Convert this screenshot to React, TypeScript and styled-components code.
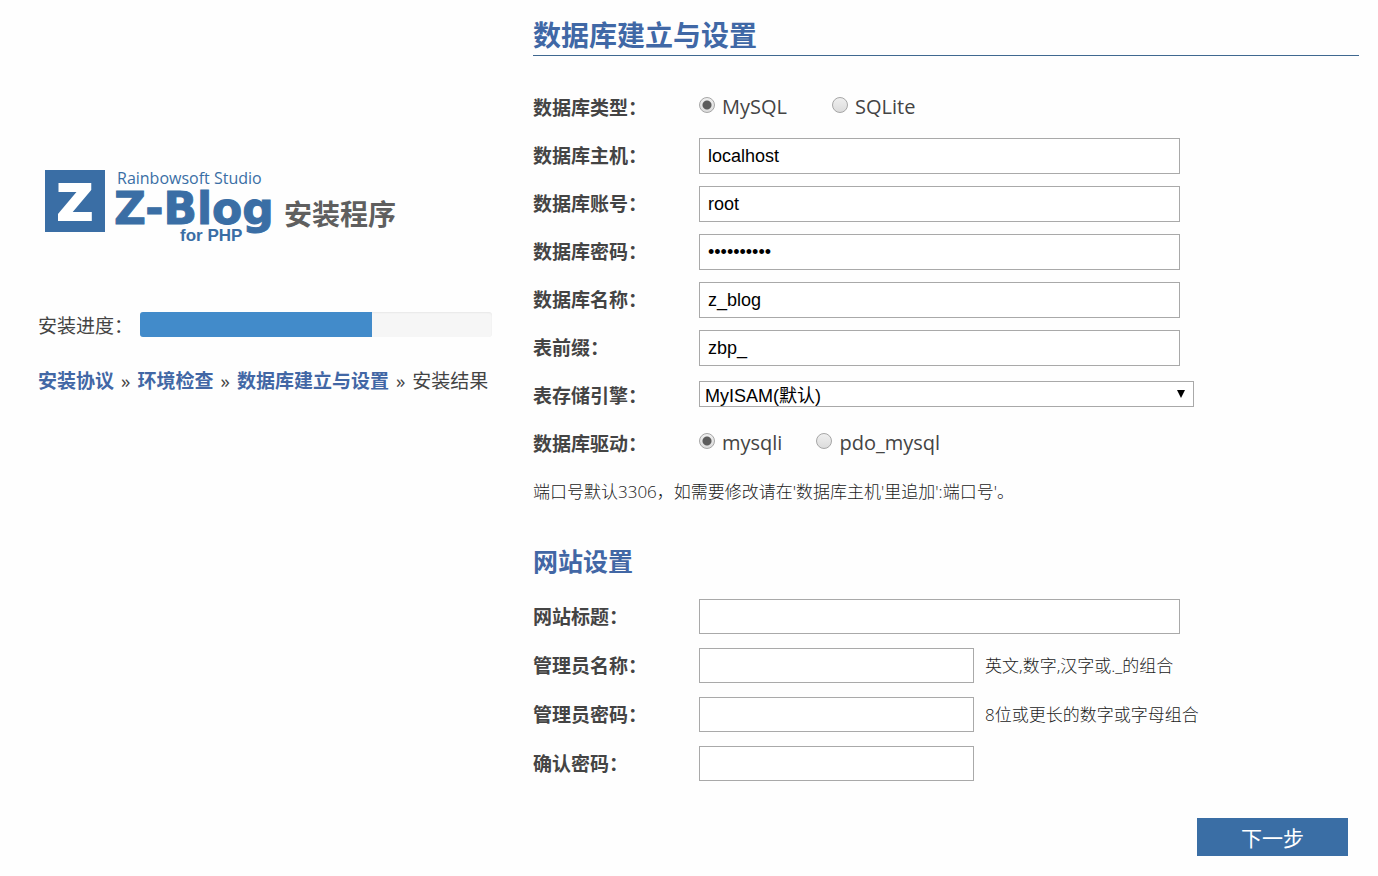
import React from "react";
import styled, { createGlobalStyle } from "styled-components";

const uiFont = `"Open Sans", "Noto Sans CJK SC", sans-serif`;
const fieldFont = `"Liberation Sans", "Noto Sans CJK SC", sans-serif`;

const GlobalStyle = createGlobalStyle`
  *, *::before, *::after { box-sizing: border-box; }
  body {
    margin: 0;
    background: #fefefe;
    color: #444;
    font-family: ${uiFont};
    font-size: 19px;
    line-height: 28px;
  }
`;

const Page = styled.form`
  display: grid;
  grid-template-columns: 454px minmax(0, 1fr);
  column-gap: 41px;
  padding: 16px 19px 20px 38px;
`;

const Sidebar = styled.aside`
  display: flex;
  flex-direction: column;
  padding-top: 148px;
`;

const Brand = styled.h1`
  display: flex;
  align-items: center;
  gap: 9px;
  margin: 0 0 68px;
  color: #5f5f5f;
  font-size: 28px;
  line-height: 40px;
`;

const Logo = styled.svg`
  display: block;
  flex: none;
`;

const BrandText = styled.span`
  padding-top: 20px;
`;

const Progress = styled.div`
  display: flex;
  align-items: flex-start;
  gap: 7px;
  margin-bottom: 27px;
`;

const ProgressLabel = styled.span`
  flex: none;
`;

const Track = styled.div`
  flex: 1;
  height: 25px;
  overflow: hidden;
  border-radius: 3px;
  background: #f6f6f6;
  box-shadow: inset 0 1px 2px rgba(0, 0, 0, 0.06);
`;

const Fill = styled.div`
  height: 100%;
  background: #428bca;
`;

const Steps = styled.ol`
  display: flex;
  margin: 0;
  padding: 0;
  list-style: none;
  white-space: nowrap;

  li + li::before {
    content: "»";
    margin: 0 7px;
    color: #444;
    font-weight: 400;
  }
`;

const Step = styled.li<{ $reached?: boolean }>`
  color: ${(p) => (p.$reached ? "#4267a5" : "#444")};
  font-weight: ${(p) => (p.$reached ? 700 : 400)};
`;

const Main = styled.main`
  min-width: 0;
`;

const Title = styled.h2`
  margin: 0 0 28px;
  border-bottom: 1px solid #3f6890;
  color: #4068a6;
  font-size: 28px;
  line-height: 39px;
`;

const Subtitle = styled.h3`
  margin: 0 0 13px;
  color: #4267a5;
  font-size: 25px;
  line-height: 36px;
`;

const Row = styled.div<{ $height?: number }>`
  display: flex;
  align-items: center;
  height: ${(p) => p.$height ?? 48}px;
`;

const Label = styled.label`
  flex: none;
  width: 166px;
  font-weight: 700;
`;

const Input = styled.input<{ $width?: number; $height?: number }>`
  flex: 0 1 ${(p) => p.$width ?? 481}px;
  min-width: 0;
  height: ${(p) => p.$height ?? 36}px;
  padding: 0 8px;
  border: 1px solid #a9a9a9;
  border-radius: 0;
  background: #fff;
  color: #000;
  font-family: ${fieldFont};
  font-size: 18px;
`;

const SelectBox = styled.div`
  position: relative;
  flex: 0 1 495px;
  min-width: 0;
  padding-bottom: 4px;
`;

const Select = styled.select`
  display: block;
  width: 100%;
  height: 26px;
  padding: 3px 24px 0 5px;
  appearance: none;
  border: 1px solid #a9a9a9;
  border-radius: 0;
  background: #fff;
  color: #000;
  font-family: ${fieldFont};
  font-size: 18px;
`;

const Arrow = styled.svg`
  position: absolute;
  top: 9px;
  right: 8px;
  pointer-events: none;
`;

const Choices = styled.div<{ $gap: number }>`
  display: flex;
  gap: ${(p) => p.$gap}px;
  padding-bottom: 2px;
  font-size: 20px;
`;

const Choice = styled.label`
  display: flex;
  gap: 7px;
`;

const Radio = styled.input`
  appearance: none;
  width: 16px;
  height: 16px;
  margin: 4px 0 0;
  border: 1px solid #a6a6a6;
  border-radius: 50%;
  background: linear-gradient(#efefef, #dcdcdc);

  &:checked {
    background: radial-gradient(circle, #5c5c5c 4px, transparent 5px),
      linear-gradient(#efefef, #dcdcdc);
  }
`;

const Note = styled.p`
  margin: 10px 0 37px;
  color: #222;
  font-size: 17px;
  font-weight: 300;
`;

const Hint = styled.span`
  margin-left: 11px;
  color: #222;
  font-size: 17px;
  font-weight: 300;
  white-space: nowrap;
`;

const Actions = styled.div`
  display: flex;
  justify-content: flex-end;
  padding: 30px 11px 0 0;
`;

const NextButton = styled.button`
  width: 151px;
  height: 38px;
  padding: 0;
  border: 0;
  background: #3a6ea5;
  color: #fff;
  font-family: ${uiFont};
  font-size: 21px;
`;

type Field = {
  id: string;
  label: string;
  type?: string;
  value?: string;
  width?: number;
  hint?: string;
};

const databaseFields: Field[] = [
  { id: "dbhost", label: "数据库主机", value: "localhost" },
  { id: "dbuser", label: "数据库账号", value: "root" },
  { id: "dbpass", label: "数据库密码", value: "zblogadmin", type: "password" },
  { id: "dbname", label: "数据库名称", value: "z_blog" },
  { id: "dbprefix", label: "表前缀", value: "zbp_" },
];

const siteFields: Field[] = [
  { id: "blogtitle", label: "网站标题" },
  { id: "username", label: "管理员名称", width: 275, hint: "英文,数字,汉字或._的组合" },
  { id: "password", label: "管理员密码", type: "password", width: 275, hint: "8位或更长的数字或字母组合" },
  { id: "repassword", label: "确认密码", type: "password", width: 275 },
];

function RadioRow({ name, label, options, gap }: { name: string; label: string; options: string[]; gap: number }) {
  return (
    <Row>
      <Label as="span" id={`${name}-label`}>{label}：</Label>
      <Choices role="radiogroup" aria-labelledby={`${name}-label`} $gap={gap}>
        {options.map((option, i) => (
          <Choice key={option}>
            <Radio type="radio" name={name} value={option} defaultChecked={i === 0} />
            {option}
          </Choice>
        ))}
      </Choices>
    </Row>
  );
}

function ZBlogLogo() {
  return (
    <Logo width="237" height="80" viewBox="0 0 237 80" role="img" aria-label="Z-Blog for PHP">
      <rect x="7" y="6" width="60" height="62" fill="#3a6ea5" />
      <g fill="#3a6ea5">
        <text x="37" y="56" textAnchor="middle" fill="#fff" stroke="#fff" strokeWidth="2" fontFamily="DejaVu Sans" fontWeight="700" fontSize="50">Z</text>
        <text x="79" y="20" fontFamily="Open Sans" fontWeight="400" fontSize="16">Rainbowsoft Studio</text>
        <text x="76" y="60" fontFamily="DejaVu Sans" fontWeight="700" fontSize="44" stroke="#3a6ea5" strokeWidth="1">Z-Blog</text>
        <text x="142" y="77" fontFamily="Liberation Sans" fontWeight="700" fontSize="17" stroke="#fefefe" strokeWidth="3" paintOrder="stroke">for PHP</text>
      </g>
    </Logo>
  );
}

export default function App() {
  return (
    <>
      <GlobalStyle />
      <Page onSubmit={(e) => e.preventDefault()}>
        <Sidebar>
          <Brand>
            <ZBlogLogo />
            <BrandText>安装程序</BrandText>
          </Brand>
          <Progress>
            <ProgressLabel id="progress-label">安装进度：</ProgressLabel>
            <Track role="progressbar" aria-labelledby="progress-label" aria-valuenow={66} aria-valuemin={0} aria-valuemax={100}>
              <Fill style={{ width: "66%" }} />
            </Track>
          </Progress>
          <Steps>
            <Step $reached>安装协议</Step>
            <Step $reached>环境检查</Step>
            <Step $reached>数据库建立与设置</Step>
            <Step>安装结果</Step>
          </Steps>
        </Sidebar>
        <Main>
          <Title>数据库建立与设置</Title>
          <RadioRow name="dbtype" label="数据库类型" options={["MySQL", "SQLite"]} gap={45} />
          {databaseFields.map((f) => (
            <Row key={f.id}>
              <Label htmlFor={f.id}>{f.label}：</Label>
              <Input id={f.id} type={f.type ?? "text"} defaultValue={f.value} />
            </Row>
          ))}
          <Row>
            <Label htmlFor="dbengine">表存储引擎：</Label>
            <SelectBox>
              <Select id="dbengine">
                <option>MyISAM(默认)</option>
                <option>InnoDB</option>
              </Select>
              <Arrow width="10" height="8" viewBox="0 0 10 8" aria-hidden="true">
                <path d="M1 0H9L5 8Z" fill="#000" />
              </Arrow>
            </SelectBox>
          </Row>
          <RadioRow name="dbdriver" label="数据库驱动" options={["mysqli", "pdo_mysql"]} gap={34} />
          <Note>端口号默认3306，如需要修改请在'数据库主机'里追加':端口号'。</Note>
          <Subtitle>网站设置</Subtitle>
          {siteFields.map((f) => (
            <Row key={f.id} $height={49}>
              <Label htmlFor={f.id}>{f.label}：</Label>
              <Input id={f.id} type={f.type ?? "text"} $width={f.width} $height={35} />
              {f.hint && <Hint>{f.hint}</Hint>}
            </Row>
          ))}
          <Actions>
            <NextButton type="submit">下一步</NextButton>
          </Actions>
        </Main>
      </Page>
    </>
  );
}
